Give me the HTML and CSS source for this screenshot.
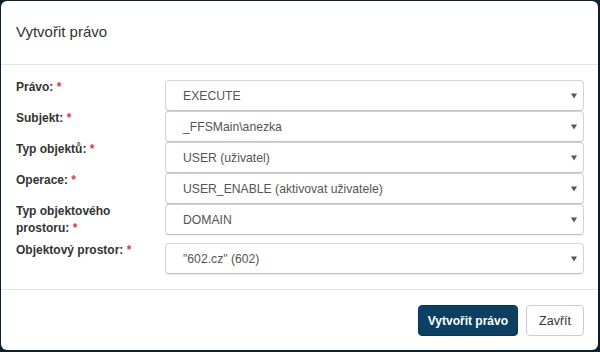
FILE: index.html
```html
<!DOCTYPE html>
<html lang="cs">

<head>
    <meta charset="UTF-8">
    <meta name="viewport" content="width=device-width, initial-scale=1.0">
    <title>Vytvořit právo</title>
    <link rel="stylesheet" href="styles.css">
</head>

<body>
    <div class="modal">
        <div class="modal-header">
            <h4 class="modal-title">Vytvořit právo</h4>
        </div>
        <form class="modal-body">
            <div class="row">
                <label>Právo: <span class="req">*</span></label>
                <div class="select"><span>EXECUTE</span><svg class="caret" viewBox="0 0 6 6"><path d="M0 0.5h6L3 5.5z"/></svg></div>
            </div>
            <div class="row">
                <label>Subjekt: <span class="req">*</span></label>
                <div class="select"><span>_FFSMain\anezka</span><svg class="caret" viewBox="0 0 6 6"><path d="M0 0.5h6L3 5.5z"/></svg></div>
            </div>
            <div class="row">
                <label>Typ objektů: <span class="req">*</span></label>
                <div class="select"><span>USER (uživatel)</span><svg class="caret" viewBox="0 0 6 6"><path d="M0 0.5h6L3 5.5z"/></svg></div>
            </div>
            <div class="row">
                <label>Operace: <span class="req">*</span></label>
                <div class="select"><span>USER_ENABLE (aktivovat uživatele)</span><svg class="caret" viewBox="0 0 6 6"><path d="M0 0.5h6L3 5.5z"/></svg></div>
            </div>
            <div class="row">
                <label>Typ objektového prostoru: <span class="req">*</span></label>
                <div class="select"><span>DOMAIN</span><svg class="caret" viewBox="0 0 6 6"><path d="M0 0.5h6L3 5.5z"/></svg></div>
            </div>
            <div class="row">
                <label>Objektový prostor: <span class="req">*</span></label>
                <div class="select"><span>"602.cz" (602)</span><svg class="caret" viewBox="0 0 6 6"><path d="M0 0.5h6L3 5.5z"/></svg></div>
            </div>
        </form>
        <div class="modal-footer">
            <button type="button" class="btn btn-primary">Vytvořit právo</button>
            <button type="button" class="btn btn-default">Zavřít</button>
        </div>
    </div>
</body>

</html>
```

FILE: styles.css
```css
body {
    margin: 0;
    background-color: #0b1f2c;
    font-family: "Liberation Sans", Arial, sans-serif;
    color: #333;
}

.modal {
    margin: 1px 2px 2px 1px;
    width: 597px;
    height: 349px;
    background-color: #fff;
    border-radius: 6px;
    box-sizing: border-box;
    display: flex;
    flex-direction: column;
}

.modal-header {
    padding: 21px 15px 22px;
    border-bottom: 1px solid #e5e5e5;
}

.modal-title {
    margin: 0;
    font-size: 15px;
    line-height: 20px;
    font-weight: normal;
    color: #333;
}

.modal-body {
    margin: 0;
    padding: 15px 14px 15px 15px;
    display: flex;
    flex-direction: column;
    border-bottom: 1px solid #e5e5e5;
}

.row {
    display: flex;
    align-items: flex-start;
}

.row label {
    width: 149px;
    box-sizing: border-box;
    padding-right: 12px;
    flex: none;
    margin: -1px 0 6px;
    font-size: 12px;
    font-weight: bold;
    line-height: 17px;
}

.req {
    color: #e0383e;
}

.select {
    position: relative;
    flex: 1;
    height: 31px;
    box-sizing: border-box;
    padding: 0 20px 0 17px;
    border: 1px solid #d4d4d4;
    border-bottom-color: #c2c2c2;
    border-radius: 4px;
    box-shadow: 0 1px 0 rgba(0, 0, 0, 0.06);
    display: flex;
    align-items: center;
    font-size: 12.2px;
    color: #555;
}

.caret {
    position: absolute;
    right: 6px;
    top: 12px;
    width: 6px;
    height: 6px;
    fill: #555;
}

.modal-footer {
    padding: 15px 14px 0 15px;
    display: flex;
    justify-content: flex-end;
    gap: 8px;
}

.btn {
    height: 31px;
    border-radius: 4px;
    font-family: inherit;
    font-size: 12px;
    cursor: pointer;
}

.btn-primary {
    padding: 0 9px;
    background-color: #0c3f61;
    border: 1px solid #0a3553;
    color: #fff;
    font-weight: bold;
}

.btn-default {
    padding: 0 12px;
    background-color: #fff;
    border: 1px solid #ccc;
    color: #333;
    font-size: 12.5px;
}
```
